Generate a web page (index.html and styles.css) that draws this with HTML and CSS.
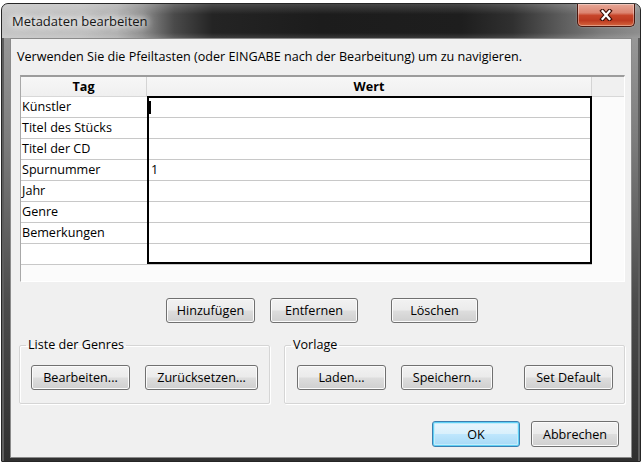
FILE: index.html
```html
<!DOCTYPE html>
<html lang="de">
<head>
<meta charset="utf-8">
<title>Metadaten bearbeiten</title>
<link rel="stylesheet" href="styles.css">
</head>
<body>
<div class="window">
  <div class="titlebar">
    <span class="title">Metadaten bearbeiten</span>
    <button class="close" aria-label="Schließen">
      <svg width="14" height="12" viewBox="0 0 14 12">
        <path d="M3.5 2 L10.5 10 M10.5 2 L3.5 10" stroke="#3b0d05" stroke-width="4.4" stroke-linecap="square" fill="none"/>
        <path d="M3.5 2 L10.5 10 M10.5 2 L3.5 10" stroke="#fff" stroke-width="2.2" stroke-linecap="square" fill="none"/>
      </svg>
    </button>
  </div>
  <div class="client">
    <p class="hint">Verwenden Sie die Pfeiltasten (oder EINGABE nach der Bearbeitung) um zu navigieren.</p>
    <div class="list">
      <div class="list-head">
        <div class="th th-tag">Tag</div>
        <div class="th th-wert">Wert</div>
        <div class="th th-fill"></div>
      </div>
      <div class="list-body">
        <div class="rows">
          <div class="row"><div class="td td-tag">Künstler</div><div class="td td-val"><span class="caret"></span></div></div>
          <div class="row"><div class="td td-tag">Titel des Stücks</div><div class="td td-val"></div></div>
          <div class="row"><div class="td td-tag">Titel der CD</div><div class="td td-val"></div></div>
          <div class="row"><div class="td td-tag">Spurnummer</div><div class="td td-val">1</div></div>
          <div class="row"><div class="td td-tag">Jahr</div><div class="td td-val"></div></div>
          <div class="row"><div class="td td-tag">Genre</div><div class="td td-val"></div></div>
          <div class="row"><div class="td td-tag">Bemerkungen</div><div class="td td-val"></div></div>
          <div class="row"><div class="td td-tag"></div><div class="td td-val"></div></div>
        </div>
        <div class="edit-box"></div>
      </div>
    </div>
    <div class="actions">
      <button class="btn btn-add">Hinzufügen</button>
      <button class="btn btn-remove">Entfernen</button>
      <button class="btn btn-clear">Löschen</button>
    </div>
    <div class="groups">
      <fieldset class="group group-genres">
        <legend>Liste der Genres</legend>
        <button class="btn btn-edit">Bearbeiten...</button>
        <button class="btn btn-reset">Zurücksetzen...</button>
      </fieldset>
      <fieldset class="group group-template">
        <legend>Vorlage</legend>
        <button class="btn btn-load">Laden...</button>
        <button class="btn btn-save">Speichern...</button>
        <button class="btn btn-default">Set Default</button>
      </fieldset>
    </div>
    <div class="footer">
      <button class="btn btn-ok">OK</button>
      <button class="btn btn-cancel">Abbrechen</button>
    </div>
  </div>
</div>
</body>
</html>
```

FILE: styles.css
```css
html, body {
  margin: 0;
  padding: 0;
  background: #ffffff;
}

body {
  font-family: "Open Sans", "Noto Sans", sans-serif;
  font-size: 12.6px;
  color: #000;
}

.window {
  margin: 3px 0 0 1px;
  width: 640px;
  box-sizing: border-box;
  border: 1px solid #262626;
  border-radius: 7px 7px 1px 1px;
  padding-bottom: 3px;
  background: linear-gradient(180deg, #a0a0a0 0%, #7c7c7c 30%, #4c4c4c 65%, #303030 100%);
  box-shadow: inset 2px 0 0 #5e5e5e, inset -2px 0 0 #5e5e5e;
  display: flex;
  flex-direction: column;
}

.titlebar {
  height: 34px;
  display: flex;
  align-items: flex-start;
  border-radius: 6px 6px 0 0;
  background:
    linear-gradient(180deg, rgba(255,255,255,0.18) 0%, rgba(255,255,255,0) 30%, rgba(0,0,0,0) 85%, rgba(255,255,255,0.12) 100%),
    linear-gradient(90deg, #c4c4c4 0%, #c0c0c0 12%, #b0b0b0 18%, #8c8c8c 22%, #4a4a4a 27%, #242424 33%, #1c1c1c 50%, #1e1e1e 72%, #303030 80%, #5e5e5e 88%, #7c7c7c 94%, #8e8e8e 100%);
}

.title {
  margin: 8px 0 0 10px;
  font-size: 13px;
  line-height: 18px;
  color: #161616;
  text-shadow: 0 0 6px #ffffff, 0 0 10px #ffffff, 0 0 14px rgba(255,255,255,0.8);
}

.close {
  margin: 0 5px 0 auto;
  width: 58px;
  height: 23px;
  padding: 0;
  display: flex;
  align-items: center;
  justify-content: center;
  border: 1px solid #4a170e;
  border-top: none;
  border-radius: 0 0 5px 5px;
  background: linear-gradient(180deg, #e7a898 0%, #dc8470 40%, #c7452a 52%, #bd3a20 75%, #d5673f 100%);
  box-shadow: inset 0 0 0 1px rgba(255,255,255,0.35), 0 0 2px rgba(255,255,255,0.4);
}

.client {
  margin: 0 8px;
  height: 420px;
  box-sizing: border-box;
  border: 1px solid #8a8a8a;
  background: #f0f0f0;
  display: flex;
  flex-direction: column;
}

.hint {
  margin: 10px 0 10px 6px;
  line-height: 16px;
  white-space: nowrap;
}

/* list view */
.list {
  margin: 0 6px 0 9px;
  height: 207px;
  box-sizing: border-box;
  border-top: 2px solid #9c9c9c;
  border-left: 1px solid #a8a8a8;
  border-right: 1px solid #ffffff;
  border-bottom: 1px solid #ffffff;
  background: #fbfbfb;
  display: flex;
  flex-direction: column;
}

.list-head {
  height: 20px;
  display: grid;
  grid-template-columns: 126px 445px 1fr;
  background: linear-gradient(180deg, #f7f7f7 0%, #efefef 100%);
}

.th {
  line-height: 19px;
  font-weight: bold;
  text-align: center;
  border-bottom: 1px solid #d8d8d8;
  border-right: 1px solid #d4d4d4;
}

.th-fill {
  border-right: none;
  background: #f0f0f0;
}

.list-body {
  position: relative;
  flex: 1;
}

.rows {
  width: 571px;
}

.row {
  display: grid;
  grid-template-columns: 126px 445px;
  height: 21px;
  box-sizing: border-box;
  border-bottom: 1px solid #c8c8c8;
  background: #ffffff;
}

.td {
  line-height: 20px;
  white-space: nowrap;
  overflow: hidden;
}

.td-tag {
  padding-left: 1px;
}

.td-val {
  padding-left: 4px;
  display: flex;
  align-items: center;
}

.caret {
  width: 2px;
  height: 13px;
  margin-left: -2px;
  background: #000;
}

.edit-box {
  position: absolute;
  left: 126px;
  top: -1px;
  width: 445px;
  height: 168px;
  box-sizing: border-box;
  border: 2px solid #000;
  pointer-events: none;
}

/* buttons */
.btn {
  height: 25px;
  box-sizing: border-box;
  padding: 0;
  font-family: inherit;
  font-size: 12.6px;
  color: #000;
  border: 1px solid #707070;
  border-radius: 3px;
  background: linear-gradient(180deg, #f2f2f2 0%, #ebebeb 48%, #dddddd 52%, #cfcfcf 100%);
  box-shadow: inset 0 0 0 1px #fbfbfb;
}

.actions {
  margin-top: 16px;
  display: flex;
}

.btn-add { margin-left: 155px; width: 89px; }
.btn-remove { margin-left: 15px; width: 88px; }
.btn-clear { margin-left: 33px; width: 87px; }

.groups {
  margin-top: 15px;
  display: flex;
}

.group {
  margin: 0;
  min-width: 0;
  box-sizing: border-box;
  border: 1px solid #d5d5d5;
  border-radius: 2px;
  box-shadow: inset 1px 1px 0 #ffffff, 1px 1px 0 #ffffff;
  padding: 13px 11px 13px 11px;
  display: flex;
}

.group legend {
  padding: 0 2px;
  line-height: 14px;
  color: #000;
}

.group-genres {
  margin-left: 8px;
  width: 251px;
}

.group-genres legend { margin-left: -5px; }

.group-template {
  margin-left: 14px;
  width: 341px;
  padding-left: 12px;
}

.group-template legend { margin-left: -6px; }

.btn-edit { width: 99px; }
.btn-reset { margin-left: 15px; width: 113px; }
.btn-load { width: 89px; }
.btn-save { margin-left: 15px; width: 92px; }
.btn-default { margin-left: auto; width: 89px; }

.footer {
  margin: 17px 12px 0 0;
  display: flex;
  justify-content: flex-end;
  gap: 11px;
}

.btn-ok,
.btn-cancel {
  width: 88px;
  height: 26px;
}

.btn-ok {
  border-color: #3c7fb1;
  background: linear-gradient(180deg, #eaf6fd 0%, #d9f0fc 48%, #bee6fd 52%, #a7d9f5 100%);
  box-shadow: inset 0 0 0 1px #5fd0f5, inset 0 0 0 2px #c4ecfb;
}
```
